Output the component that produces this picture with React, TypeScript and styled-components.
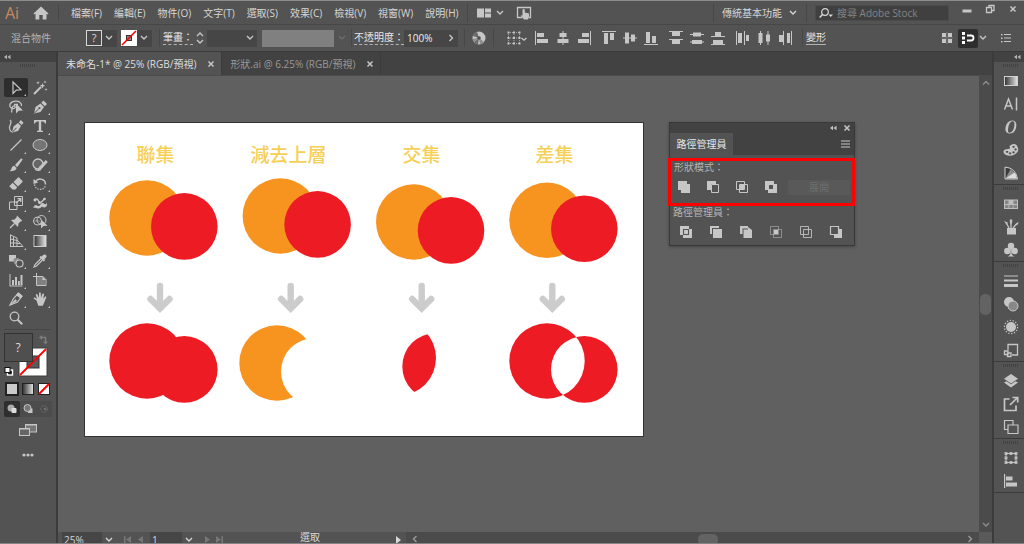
import React from "react";
import styled, { createGlobalStyle, css } from "styled-components";

const color = {
  panel: "#535353",
  dark: "#424242",
  field: "#464646",
  line: "#474747",
  edge: "#3b3b3b",
  canvas: "#606060",
  text: "#d6d6d6",
  muted: "#b4b4b4",
  icon: "#c6c6c6",
  orange: "#f7941f",
  red: "#ed1c24",
  mark: "#ff0000",
};

const GlobalStyle = createGlobalStyle`
  * { box-sizing: border-box; }
  body { margin: 0; overflow: hidden; background: ${color.panel}; }
  body, button, input, select {
    font-family: "Open Sans", "Noto Sans CJK TC", sans-serif;
    font-size: 10px;
    line-height: 16px;
    color: ${color.text};
  }
  button { padding: 0; border: 0; background: none; cursor: pointer; white-space: nowrap; }
  input, select { border: 0; border-radius: 0; padding: 0 3px; background: ${color.field}; min-width: 0; }
  svg { display: block; flex: none; }
`;

/* ---------- shell ---------- */

const Window = styled.div`
  display: flex;
  flex-direction: column;
  height: 100vh;
  border-top: 1px solid #8c8c8c;
  border-bottom: 1px solid #858585;
`;

const MenuBar = styled.header`
  display: flex;
  align-items: center;
  height: 24px;
  padding-left: 5px;
  background: ${color.panel};
  border-bottom: 1px solid ${color.line};
`;

const ControlBar = styled.div`
  display: flex;
  align-items: center;
  height: 27px;
  background: ${color.panel};
  border-bottom: 1px solid ${color.edge};
`;

const Body = styled.div`
  display: flex;
  flex: 1;
  min-height: 0;
`;

const Logo = styled.span`
  width: 28px;
  font-size: 16px;
  color: #c98860;
`;

const Menus = styled.nav`
  display: flex;
  gap: 12px;
  padding-left: 12px;
  margin-left: 9px;
  border-left: 1px solid ${color.line};
`;

const MenuButton = styled.button`
  color: ${color.text};
`;

const Spring = styled.div<{ $grow?: number }>`
  flex: ${(p) => p.$grow ?? 1};
`;

const Rule = styled.span<{ $gap: number }>`
  width: 1px;
  height: 18px;
  margin: 0 ${(p) => p.$gap}px;
  background: ${color.line};
`;

const IconButton = styled.button<{ $w?: number; $h?: number; $active?: boolean }>`
  display: flex;
  align-items: center;
  justify-content: center;
  flex: none;
  width: ${(p) => p.$w ?? 16}px;
  height: ${(p) => p.$h ?? 16}px;
  color: ${color.icon};
  border-radius: 2px;
  ${(p) => p.$active && css`background: #2e2e2e; color: #ffffff;`}
`;

const Workspace = styled.button`
  display: flex;
  align-items: center;
  gap: 6px;
`;

const Search = styled.label`
  display: flex;
  align-items: center;
  width: 134px;
  height: 16px;
  padding-left: 3px;
  background: #404040;
  border: 1px solid #4b4b4b;
  input { flex: 1; height: 14px; background: transparent; }
  input::placeholder { color: #848484; opacity: 1; }
`;

const WindowButtons = styled.div`
  display: flex;
  align-self: flex-start;
  margin-left: 6px;
`;

/* ---------- control bar ---------- */

const ObjectType = styled.span`
  width: 86px;
  padding-left: 11px;
  color: ${color.muted};
`;

const Swatch = styled.div`
  display: flex;
  align-items: center;
  width: 31px;
  height: 17px;
  margin-right: 4px;
  background: ${color.field};
`;

const FieldLabel = styled.label`
  line-height: 13px;
  border-bottom: 1px dashed ${color.muted};
  white-space: nowrap;
  color: #e6e6e6;
`;

const Combo = styled.div<{ $w: number }>`
  display: flex;
  align-items: center;
  width: ${(p) => p.$w}px;
  height: 17px;
  background: ${color.field};
  input { flex: 1; height: 17px; color: #f0f0f0; }
`;

const BrushSelect = styled.select`
  appearance: none;
  width: 72px;
  height: 17px;
  margin-left: 5px;
  background: #808080;
  opacity: 1;
`;

const AlignGroup = styled.div`
  display: flex;
  gap: 5px;
  margin-right: 9px;
`;

const TextLink = styled.button`
  margin-left: 3px;
  line-height: 13px;
  border-bottom: 1px solid ${color.muted};
  color: #e6e6e6;
`;

/* ---------- tools ---------- */

const Tools = styled.aside`
  flex: none;
  width: 58px;
  background: ${color.panel};
  border-right: 2px solid ${color.edge};
`;

const DockHeader = styled.div<{ $end?: boolean }>`
  display: flex;
  align-items: center;
  justify-content: ${(p) => (p.$end ? "flex-end" : "flex-start")};
  height: 10px;
  padding: 0 3px;
  background: ${color.dark};
  color: ${color.muted};
`;

const Grip = styled.div`
  height: 7px;
  width: 16px;
  margin: 0 auto;
  background: repeating-linear-gradient(90deg, #424242 0 1px, transparent 1px 2px) center / 16px 3px no-repeat;
`;

const ToolGrid = styled.div`
  display: grid;
  grid-template-columns: 24px 24px;
  grid-template-rows: repeat(13, 1fr);
  height: 250px;
  margin: 9px 0 0 4px;
`;

const ToolButton = styled.button<{ $active?: boolean; $more?: boolean }>`
  position: relative;
  display: flex;
  align-items: center;
  justify-content: center;
  color: ${color.icon};
  border-radius: 2px;
  ${(p) => p.$active && css`background: #2e2e2e;`}
  ${(p) => p.$more && css`
    &::after {
      content: "";
      position: absolute;
      right: 2px;
      bottom: 1px;
      border: 1px solid;
      border-color: transparent #c6c6c6 #c6c6c6 transparent;
    }
  `}
`;

const PaintArea = styled.div`
  margin: 1px 5px 0 4px;
  padding-top: 3px;
  border-top: 1px solid ${color.line};
`;

const ModeRow = styled.div<{ $boxed?: boolean }>`
  display: flex;
  width: 48px;
  margin-top: 4px;
  ${(p) => p.$boxed && css`background: #4c4c4c; border-radius: 2px;`}
`;

const CenterRow = styled.div`
  display: flex;
  justify-content: center;
  margin-top: 5px;
`;

/* ---------- document ---------- */

const Documents = styled.main`
  display: flex;
  flex-direction: column;
  flex: 1;
  min-width: 0;
`;

const Tabs = styled.div`
  display: flex;
  flex: none;
  height: 24px;
  background: ${color.dark};
  border-bottom: 1px solid #4b4b4b;
`;

const Tab = styled.div<{ $active?: boolean }>`
  display: flex;
  align-items: center;
  gap: 9px;
  padding: 0 4px 0 8px;
  border-right: 1px solid ${color.edge};
  background: ${(p) => (p.$active ? color.panel : color.dark)};
  button:first-child { color: ${(p) => (p.$active ? "#dedede" : "#999999")}; }
`;

const Stage = styled.div`
  display: flex;
  flex: 1;
  min-height: 0;
`;

const Canvas = styled.div`
  display: flex;
  align-items: flex-start;
  gap: 25px;
  flex: 1;
  min-width: 0;
  overflow: hidden;
  padding: 46px 0 0 26px;
  background: ${color.canvas};
`;

const Artboard = styled.section`
  display: grid;
  grid-template-columns: repeat(4, 133px);
  flex: none;
  padding: 18px 22px 26px 4px;
  background: #ffffff;
  border: 1px solid #333333;
`;

const Sample = styled.figure`
  margin: 0;
`;

const SampleTitle = styled.figcaption`
  height: 34px;
  font-size: 19px;
  line-height: 28px;
  font-weight: 500;
  text-align: center;
  color: #f6cf57;
`;

const VerticalScroll = styled.div`
  display: flex;
  flex-direction: column;
  align-items: center;
  flex: none;
  width: 13px;
  background: #4b4b4b;
`;

const ScrollButton = styled(IconButton)`
  color: #8e8e8e;
`;

const Thumb = styled.span<{ $w: number; $h: number }>`
  flex: none;
  width: ${(p) => p.$w}px;
  height: ${(p) => p.$h}px;
  border-radius: 5px;
  background: #636363;
`;

const StatusBar = styled.footer`
  display: flex;
  flex: none;
  height: 11px;
  overflow: hidden;
  background: ${color.panel};
`;

const StatusItem = styled.div<{ $w: number }>`
  display: flex;
  align-items: center;
  justify-content: center;
  flex: none;
  width: ${(p) => p.$w}px;
  height: 16px;
  color: ${color.text};
`;

const StatusText = styled.span`
  flex: none;
  width: 160px;
  line-height: 11px;
  text-align: center;
`;

const StatusField = styled.input<{ $w: number }>`
  flex: none;
  width: ${(p) => p.$w}px;
  height: 16px;
  padding: 0 2px;
`;

const HorizontalTrack = styled.div`
  display: flex;
  align-items: center;
  flex: 1;
  height: 14px;
  padding: 0 4px;
  background: #4b4b4b;
  color: #9a9a9a;
`;

const Corner = styled.div`
  width: 13px;
  background: #5a5a5a;
`;

/* ---------- floating panel ---------- */

const Floating = styled.section`
  flex: none;
  width: 186px;
  background: ${color.panel};
  border: 1px solid #393939;
  box-shadow: 0 1px 3px rgba(0, 0, 0, 0.3);
`;

const FloatingBar = styled.div`
  display: flex;
  align-items: center;
  justify-content: flex-end;
  gap: 6px;
  height: 10px;
  padding-right: 3px;
  background: ${color.dark};
`;

const FloatingTabs = styled.div`
  display: flex;
  justify-content: space-between;
  height: 22px;
  padding-right: 4px;
  background: ${color.dark};
`;

const FloatingTab = styled.button`
  width: 63px;
  background: ${color.panel};
  color: #e6e6e6;
`;

const ModeBox = styled.div`
  height: 48px;
  margin: 3px -1px 0 -2px;
  border: 3px solid ${color.mark};
`;

const GroupLabel = styled.div`
  padding-left: 3px;
  line-height: 12px;
  color: ${color.muted};
`;

const Operations = styled.div<{ $left: number; $gap: number }>`
  display: flex;
  align-items: center;
  gap: ${(p) => p.$gap}px;
  height: 16px;
  margin-top: 6px;
  padding-left: ${(p) => p.$left}px;
`;

const Expand = styled.button`
  width: 62px;
  height: 15px;
  margin-left: -5px;
  line-height: 15px;
  background: #595959;
  color: #6e6e6e;
`;

const FinderGroup = styled.div`
  padding: 0 0 5px;
`;

/* ---------- right dock ---------- */

const Dock = styled.aside`
  flex: none;
  width: 32px;
  background: ${color.panel};
  border-left: 2px solid ${color.edge};
`;

const DockGroup = styled.div`
  padding-left: 3px;
  border-bottom: 1px solid ${color.edge};
`;

const DockButton = styled.button`
  display: flex;
  align-items: center;
  justify-content: center;
  width: 100%;
  height: 23px;
  color: ${color.icon};
`;

/* ---------- icons ---------- */

const Icon = ({ w = 16, h = 16, children }: { w?: number; h?: number; children: React.ReactNode }) => (
  <svg width={w} height={h} viewBox={`0 0 ${w} ${h}`} fill="currentColor" aria-hidden="true">
    {children}
  </svg>
);

const Line = ({ d, width = 1.2 }: { d: string; width?: number }) => (
  <path d={d} fill="none" stroke="currentColor" strokeWidth={width} />
);

const Chevron = ({ dir = "down" }: { dir?: "down" | "up" | "left" | "right" }) => {
  const d = { down: "M2 3L5 6L8 3", up: "M2 6.5L5 3.5L8 6.5", left: "M6.5 2L3.5 5L6.5 8", right: "M3.5 2L6.5 5L3.5 8" }[dir];
  return <Icon w={10} h={10}><Line d={d} width={1.4} /></Icon>;
};

const Close = () => <Icon w={8} h={8}><Line d="M1.5 1.5L6.5 6.5M6.5 1.5L1.5 6.5" width={1.5} /></Icon>;

const Collapse = () => (
  <Icon w={8} h={6}><path d="M4 .8V5.2L1 3zM7.5 .8V5.2L4.5 3z" /></Icon>
);

const Bars = () => <Icon w={9} h={8}><Line d="M0 1H9M0 4H9M0 7H9" width={1} /></Icon>;

const alignIcons: [string, React.ReactNode][] = [
  ["水平齊左", <path d="M1 1h1v14h-1zM3 3h7v4h-7zM3 9h11v4h-11z" />],
  ["水平居中", <path d="M7.5 1h1v14h-1zM4.5 3h7v4h-7zM2.5 9h11v4h-11z" />],
  ["水平齊右", <path d="M14 1h1v14h-1zM6 3h7v4h-7zM2 9h11v4h-11z" />],
  ["垂直齊上", <path d="M1 1h14v1h-14zM3 3h4v11h-4zM9 3h4v7h-4z" />],
  ["垂直居中", <path d="M1 7.5h14v1h-14zM3 2.500h4v11h-4zM9 4.5h4v7h-4z" />],
  ["垂直齊下", <path d="M1 14h14v1h-14zM3 2h4v11h-4zM9 6h4v7h-4z" />],
  ["垂直依上緣均分", <path d="M1 1h14v1h-14zM4 2h8v4h-8zM1 9h14v1h-14zM4 10h8v4h-8z" />],
  ["垂直居中均分", <path d="M1 4h14v1h-14zM4 2.5h8v4h-8zM1 11.500h14v1h-14zM3 10h10v4h-10z" />],
  ["垂直依下緣均分", <path d="M1 6h14v1h-14zM5 2h6v4h-6zM1 14h14v1h-14zM3 10h10v4h-10z" />],
  ["水平依左緣均分", <path d="M1 1h1v14h-1zM3 3h4v10h-4zM9 1h1v14h-1zM11 5h3v6h-3z" />],
  ["水平居中均分", <path d="M4 1h1v14h-1zM2.500 3h4v10h-4zM11.500 1h1v14h-1zM10 4.500h4v7h-4z" />],
  ["水平依右緣均分", <path d="M6 1h1v14h-1zM2 5h4v7h-4zM14 1h1v14h-1zM10 3h3v10h-3z" />],
];

const toolIcons: [string, React.ReactNode, boolean][] = [
  ["選取工具", <Line d="M5 2V13.500L8.300 10.200L13 9.800Z" />, true],
  ["魔術棒工具", <><Line d="M2 14L9 7" width={2} /><path d="M10.500 3l.8 1.900 1.900.8-1.900.8-.8 1.900-.8-1.900-1.900-.8 1.900-.8zM6 1l.5 1.300 1.300.5-1.300.5L6 4.600l-.5-1.300-1.300-.5 1.300-.5zM13 .5l.4 1.100 1.100.4-1.100.4-.4 1.100-.4-1.100-1.100-.4 1.100-.4zM14 8l.4 1.100 1.100.4-1.100.4-.4 1.100-.4-1.100-1.100-.4 1.100-.4z" /></>, false],
  ["套索工具", <><Line d="M13.500 7C14 3.500 10.500 2 7.500 2.200C4 2.400 1.500 4.300 1.800 6.700C2 9.300 5 10 6.500 9.200C8 8.300 7 6.300 5.300 7C3.500 8 4 11 3.500 13.500M6 5.500H10" width={1.300} /><path d="M8 4.500V14.500L10.600 11.800L15 11.500Z" /></>, false],
  ["鋼筆工具", <><path d="M2 14.500L3.500 8L8.500 4.500L12 8L8.500 13Z" /><path d="M9.300 3.700L11.500 1.500L15 5L12.800 7.200Z" /><path d="M2.500 14L7 9.500" stroke="#535353" strokeWidth="1" /><circle cx="7.500" cy="9" r="1.100" fill="#535353" /></>, true],
  ["曲線工具", <><Line d="M2 2C5 4 1 7 1.500 10C2 13 3 14 5 14" /><path d="M4 14.500L5.500 8.500L10 5L13 8L10 13Z" /><path d="M10.800 4.200L12.800 2L15.500 4.800L13.700 7Z" /><path d="M4.500 14L8.500 9.800" stroke="#535353" /></>, false],
  ["文字工具", <path d="M2 2H14V5.500H12.900Q12.600 3.500 10.500 3.500H9.200V12Q9.200 13 11 13V14H5V13Q6.800 13 6.800 12V3.500H5.500Q3.400 3.500 3.100 5.500H2Z" />, true],
  ["線段區段工具", <Line d="M2.500 13.500L13.500 2.500" />, true],
  ["橢圓形工具", <ellipse cx="8" cy="8" rx="7" ry="5.500" fill="#757575" stroke="currentColor" />, true],
  ["繪圖筆刷工具", <><path d="M7 8L12.700 1.700Q14.500 1 14.500 2.700L9.200 10.200Z" /><path d="M6.200 8.800L8.600 11Q8 14.300 1.500 14.300Q3.500 13 3.600 11Q4 9 6.200 8.800Z" /></>, true],
  ["Shaper 工具", <><circle cx="6" cy="7" r="5" fill="#666" stroke="currentColor" strokeWidth="1.300" /><path d="M7 10L13.800 3L15.800 5L9.500 12L6 13.500Z" /><Line d="M3 12Q6 14.500 9 12.500" /></>, true],
  ["橡皮擦工具", <><path d="M5.500 6L10 1.500Q10.500 1 11 1.500L14.500 5Q15 5.500 14.500 6L10 10.500Z" /><path d="M4.700 6.800L9.200 11.300L7.500 13.500H4.500L1.500 10.500V10Z" /></>, true],
  ["旋轉工具", <><Line d="M4 5C7 1.500 13.500 3 13.500 8.500" width={1.500} /><path d="M1.500 3V8L6.200 6.500Z" /><path d="M2.500 8.500C3.500 14.500 11.500 15 13.300 10" fill="none" stroke="currentColor" strokeWidth="1.300" strokeDasharray="1.300 1.300" /></>, true],
  ["縮放工具", <><Line d="M6.500 1.500H14.500V10.500H6.500ZM1.500 7H9V14.500H1.500Z" width={1} /><Line d="M8 8L12.500 4M9.500 3.700H12.800V7" /></>, true],
  ["寬度工具", <><path d="M1 12.500Q3.500 9 5 10.500Q7 12 8.500 9.500Q10 7 12.500 9Q14.500 10 15 7.500Q15.500 12 12.500 12.500Q10.500 12.500 10 11.500Q8 14 5 13.200Q3 12.500 1 12.500Z" /><Line d="M2.500 4.500Q5.500 3 6.500 6T10 6.500T13 3" width={1.400} /><circle cx="3" cy="5" r="1.500" /><circle cx="7.500" cy="7.500" r="1.500" /><circle cx="12.500" cy="4" r="1.300" /></>, true],
  ["圖釘工具", <><path d="M9 1.500L14.500 7L12.500 7.500L10.500 9.500L10 13L3 6L6.500 5.500L8.500 3.500Z" /><Line d="M6.500 9.500L2 14" /></>, true],
  ["形狀建立程式工具", <><circle cx="5.500" cy="7" r="4" fill="none" stroke="currentColor" /><circle cx="9.500" cy="6" r="4.500" fill="none" stroke="currentColor" /><path d="M1.500 7H8" stroke="currentColor" strokeDasharray="1 1" /><path d="M9 5.500V14.500L11.500 12L15.500 11.700Z" /></>, true],
  ["透視格點工具", <><Line d="M2.500 1.500V14M2.500 2L9 5V13.500H2M2.500 6L9 7.500M2.500 10H9M5.500 3.500V13.500M9 7L15 13.500H9M9 10.500H12.500" width={1} /></>, true],
  ["漸層工具", <rect x="2" y="2.500" width="12" height="11" fill="url(#fade)" stroke="#cfcfcf" />, false],
  ["漸變工具", <><rect x="1" y="2" width="7" height="6.500" /><rect x="5.500" y="5" width="6" height="6" rx="2" fill="#8d8d8d" /><circle cx="11.500" cy="10.500" r="3.500" fill="#535353" stroke="currentColor" strokeWidth="1.200" /></>, true],
  ["檢色滴管工具", <><path d="M9.500 3.500L11.500 1.700Q14.500 .5 14.600 3.800L12.500 6.500L13 7.500L11.800 8.500L7.500 4.200L8.500 3Z" /><Line d="M9 5.500L3 11.500L2 14L4.500 13L10.500 7" /></>, true],
  ["長條圖工具", <path d="M1.500 2h1v11.500h12v1h-13zM4 8h2v5h-2zM7 5h2v8h-2zM10 9h1.800v4h-1.800zM12.500 3h2v10h-2z" />, true],
  ["工作區域工具", <><Line d="M4.500 1V13.500H14V7.500L11 4.500H1" width={1} /><path d="M5 5H10.500L13.500 8V13H5Z" fill="#808080" /><path d="M10.500 4.500V8H14Z" /></>, false],
  ["切片工具", <><Line d="M2 14L5.500 7.500L10.500 2L14 5L9.500 11Z" /><path d="M10 1.500L14.500 5.500L12.500 7.500L8 4ZM2 14L7.500 8L9 10Z" /></>, true],
  ["手形工具", <path d="M4.500 9.500L1.500 7.500Q2 5.800 3.800 7L5 8L3.800 3.800Q4.500 2.300 5.500 3.600L7 7L7 2Q7.900 .7 8.800 2L9 7L10.300 2.800Q11.500 1.900 12 3.200L11.300 7.700L13.200 5.500Q14.500 5.200 14.300 6.500L12 12L10.800 14.700H6.300Z" />, true],
  ["放大鏡工具", <><circle cx="6.500" cy="6.500" r="4.300" fill="none" stroke="currentColor" strokeWidth="1.300" /><Line d="M9.700 9.700L14.200 14.200" width={2} /></>, false],
];

const dockGroups: [string, React.ReactNode][][] = [
  [
    ["漸層", <rect x="1.500" y="3.500" width="13" height="9" fill="url(#fade)" stroke="#d0d0d0" />],
    ["字元", <Line d="M1.500 13.500L5.500 3L9.500 13.500M3 10H8M13.500 1.500V14.500" width={1.500} />],
    ["OpenType", <path fillRule="evenodd" d="M9.500 1.500C14 1.500 14 7 12.500 10.500C11 14 8.500 14.700 6 14.500C1.500 14 2 8.500 3.500 5.500C5 2.500 7 1.500 9.500 1.500ZM9.500 2.300C7 2.600 5.700 6 5.200 9C4.800 12 4.900 13.700 6.500 13.700C9.500 13.700 10.800 10 11.300 7C11.700 4 11.500 2.100 9.500 2.300Z" />],
    ["色彩", <path fillRule="evenodd" d="M8 3Q11 1 13.500 3Q16.500 7 14.500 10Q11 14.500 5 13.500Q.5 12.500 .5 9.500Q.7 7 5 7Q8 7 6.500 5Q6.500 3.500 8 3ZM4 8.700a1.300 1.100 0 1 0 .1 0ZM7 10.200a1.300 1.100 0 1 0 .1 0ZM10.500 9.200a1.300 1.100 0 1 0 .1 0ZM12.500 6.300a1.200 1.100 0 1 0 .1 0ZM10.500 3.700a1.200 1 0 1 0 .1 0Z" />],
    ["色彩參考", <><path d="M2 2Q13 3 14.500 14H2Z" fill="#3c3c3c" stroke="#d0d0d0" /><path d="M2.500 13.500L7.500 4.300Q13 7.500 14 13.500Z" fill="#8c8c8c" /><path d="M2.500 13.500L11.500 7.500Q13.500 10 14 13.500Z" fill="#dcdcdc" /></>],
  ],
  [
    ["色票", <><rect x="1" y="3.500" width="14" height="9.500" fill="#bdbdbd" /><path d="M2 4.500h3.500v3.500h-3.500zM10.500 4.500h3.500v3.500h-3.500zM2 9h3.500v3h-3.500zM6.300 9h3.500v3h-3.500zM10.500 9h3.500v3h-3.500z" fill="#858585" /></>],
    ["筆刷", <><path d="M4 9H13V15.500H4Z" /><Line d="M6 9L3 3.500M8 9V2M10 9L14 4.500" width={1.300} /><path d="M1 2L4.800 3.500L4 6ZM6.800 .5H9.300L9 4.500H7ZM15.500 2.500L15 5.500L12 6Z" /></>],
    ["符號", <><circle cx="8" cy="4" r="3.200" /><circle cx="4.300" cy="9" r="3.200" /><circle cx="11.700" cy="9" r="3.200" /><path d="M7.200 6H8.800L8.600 11.500Q9 13.500 11.500 14.500H4.500Q7 13.500 7.400 11.500Z" /></>],
  ],
  [
    ["筆畫", <path d="M1 2.500h14v1h-14zM1 6.500h14v2h-14zM1 11h14v3h-14z" />],
    ["透明度", <><circle cx="6" cy="6" r="5" /><circle cx="10" cy="10" r="5" fill="#888" stroke="currentColor" /></>],
    ["外觀", <><circle cx="8" cy="8" r="5" /><circle cx="8" cy="8" r="6.600" fill="none" stroke="currentColor" strokeWidth="1.200" strokeDasharray="1.300 1.660" /></>],
    ["繪圖樣式", <><Line d="M5 8V2.500H14.500V13H9" width={1.300} /><Line d="M1.500 9H5V12.500H1.500ZM4.500 11H8V14.500H4.500Z" width={1.300} /></>],
  ],
  [
    ["圖層", <><path d="M8 1L15 5.800L8 10.500L1 5.800Z" /><path d="M1 9.500L3.500 8.200L8 11.200L12.500 8.200L15 9.500L8 14.500Z" /></>],
    ["資產轉存", <Line d="M6.500 3H1.500V14.500H13V9.500M7 9L14 2M9.500 1.500H14.700V6.500" width={1.700} />],
    ["工作區域", <Line d="M4.500 10.500H1.500V1.500H10V5.500M5 6H15V14.500H5Z" width={1.200} />],
  ],
  [
    ["變形", <><Line d="M3 3.500H13V12.500H3Z" width={1} /><path d="M1.500 2h3v3h-3zM6.500 2h3v3h-3zM11.500 2h3v3h-3zM1.500 6.500h3v3h-3zM11.500 6.500h3v3h-3zM1.500 11h3v3h-3zM6.500 11h3v3h-3zM11.500 11h3v3h-3z" fillOpacity=".85" /></>],
    ["對齊", <path d="M1 1h1.200v14h-1.200zM3 3.500h6.500v4h-6.500zM3 9.500h11v4h-11z" />],
  ],
];

const twoSquares = "M1.500 1.500H9.500V9.500H1.500ZM4.500 4.500H12.500V12.500H4.500Z";

const shapeModes: [string, React.ReactNode][] = [
  ["聯集", <path d="M1 1H10V4H13V13H4V10H1Z" />],
  ["減去上層", <><path d="M1 1H10V4H5V10H1Z" /><Line d="M5.500 4.500H12.500V12.500H5.500Z" width={1} /></>],
  ["交集", <><Line d={twoSquares} width={1} /><path d="M5 5H9V9H5Z" /></>],
  ["差集", <path fillRule="evenodd" d="M1 1H10V4H13V13H4V10H1ZM5 5V9H9V5Z" />],
];

const finderModes: [string, React.ReactNode][] = [
  ["分割", <><path fillRule="evenodd" d="M1 1H10V4H13V13H4V10H1ZM4 4V10H10V4Z" /><path d="M5 5H9V9H5Z" /></>],
  ["剪裁覆蓋範圍", <><path d="M1 1H10V3H3V9H1Z" /><path d="M4 4H13V13H4Z" /></>],
  ["合併", <><path d="M1 1H9V3.500H3.500V9H1Z" /><path d="M4.500 4.500H9V2L13 5V13H4.500Z" /></>],
  ["裁切", <><g opacity=".5"><Line d={twoSquares} width={1} /></g><path d="M5 5H9V9H5Z" /></>],
  ["外框", <g opacity=".85"><Line d={twoSquares} width={1} /></g>],
  ["依後置物件剪裁", <><Line d="M1.500 1.500H9.500V9.500H1.500Z" width={1.200} /><path d="M10 4H13V13H5V10H10Z" /></>],
];

/* ---------- artwork ---------- */

type Point = [number, number];
type Mode = "unite" | "minus" | "intersect" | "exclude";

const back = 37.7;
const front = 33.3;
const frontOf = ([x, y]: Point): Point => [x + 37.3, y + 8.4];

const disc = ([x, y]: Point, r: number) =>
  `M${x - r} ${y}a${r} ${r} 0 1 0 ${2 * r} 0a${r} ${r} 0 1 0 ${-2 * r} 0Z`;

const Result = ({ mode, at }: { mode: Mode; at: Point }) => {
  const a = disc(at, back);
  const b = disc(frontOf(at), front);
  if (mode === "unite") return <path d={a + b} fill={color.red} />;
  if (mode === "exclude") return <path d={a + b} fillRule="evenodd" fill={color.red} />;
  if (mode === "minus")
    return (
      <>
        <mask id="cut"><rect y="-20" width="133" height="260" fill="#fff" /><path d={b} fill="#000" /></mask>
        <path d={a} fill={color.orange} mask="url(#cut)" />
      </>
    );
  return (
    <>
      <clipPath id="overlap"><path d={a} /></clipPath>
      <path d={b} fill={color.red} clipPath="url(#overlap)" />
    </>
  );
};

const samples: { title: string; mode: Mode; pair: Point; arrow: number; result: Point }[] = [
  { title: "聯集", mode: "unite", pair: [58, 43], arrow: 71, result: [58, 186] },
  { title: "減去上層", mode: "minus", pair: [58.3, 41], arrow: 68.7, result: [55, 188] },
  { title: "交集", mode: "intersect", pair: [58.7, 47], arrow: 66.7, result: [43.3, 183] },
  { title: "差集", mode: "exclude", pair: [59, 45.3], arrow: 64.3, result: [59, 186] },
];

const App = () => (
  <Window>
    <GlobalStyle />
    <svg width="0" height="0" aria-hidden="true">
      <defs>
        <linearGradient id="fade"><stop offset="0" stopColor="#303030" /><stop offset="1" stopColor="#e8e8e8" /></linearGradient>
      </defs>
    </svg>

    <MenuBar>
      <Logo>Ai</Logo>
      <IconButton aria-label="首頁">
        <Icon><path d="M8 1.500L15.500 8.500L14.500 9.600L13.500 8.800V14.500H9.700V10H6.300V14.500H2.500V8.800L1.500 9.600L.5 8.500Z" /></Icon>
      </IconButton>
      <Menus>
        {["檔案(F)", "編輯(E)", "物件(O)", "文字(T)", "選取(S)", "效果(C)", "檢視(V)", "視窗(W)", "說明(H)"].map((m) => (
          <MenuButton key={m}>{m}</MenuButton>
        ))}
      </Menus>
      <Rule $gap={8} />
      <IconButton aria-label="排列文件">
        <Icon><path d="M1 3.500H8V12.500H1ZM9 3.500H15V7.500H9ZM9 8.500H15V12.500H9Z" /></Icon>
      </IconButton>
      <IconButton aria-label="排列選項"><Chevron /></IconButton>
      <IconButton aria-label="觸控工作區" $w={32}>
        <Icon><Line d="M6 12.500H1.500V2.500H14.500V12.500H13" width={1.300} /><path d="M6.500 4.500Q8 3.500 8.800 4.500V7.500L13 8.500V12L12 14.500H8L4.500 10.500L6.500 10.500Z" /></Icon>
      </IconButton>
      <Spring />
      <Rule $gap={8} />
      <Workspace>傳統基本功能<Chevron /></Workspace>
      <Rule $gap={8} />
      <Search>
        <Icon w={15} h={12}><circle cx="6" cy="5" r="3.300" fill="none" stroke="currentColor" strokeWidth="1.200" /><Line d="M3.700 7.300L.7 10.500" width={1.500} /><path d="M9.500 7.500H14L11.700 10Z" /></Icon>
        <input type="search" aria-label="搜尋 Adobe Stock" placeholder="搜尋 Adobe Stock" />
      </Search>
      <WindowButtons>
        <IconButton aria-label="最小化" $w={23}><Icon w={10} h={10}><path d="M.5 5.500H9.500V8.500H.5Z" /></Icon></IconButton>
        <IconButton aria-label="還原" $w={23}><Icon w={10} h={10}><Line d="M4 3V1.500H9V6.500H7M1.500 3.500H6.500V8.500H1.500Z" width={1.300} /></Icon></IconButton>
        <IconButton aria-label="關閉" $w={23}><Close /></IconButton>
      </WindowButtons>
    </MenuBar>

    <ControlBar>
      <ObjectType>混合物件</ObjectType>
      <Swatch>
        <IconButton aria-label="填色">
          <Icon><rect x=".5" y=".5" width="15" height="15" fill="#4a4a4a" stroke="#d8d8d8" /><text x="8" y="12" textAnchor="middle" fontSize="11" fill="#d8d8d8">?</text></Icon>
        </IconButton>
        <IconButton aria-label="填色選項" $w={14}><Chevron /></IconButton>
      </Swatch>
      <Swatch>
        <IconButton aria-label="筆畫色彩">
          <Icon><rect width="16" height="16" fill="#fff" /><rect x="5.500" y="5.500" width="5" height="5" fill="#888" stroke="#333" /><path d="M1 15L15 1" stroke="red" strokeWidth="1.600" /></Icon>
        </IconButton>
        <IconButton aria-label="筆畫選項" $w={14}><Chevron /></IconButton>
      </Swatch>
      <Rule $gap={3} />
      <FieldLabel htmlFor="stroke">筆畫：</FieldLabel>
      <IconButton aria-label="調整筆畫" $w={14}>
        <Icon w={10} h={16}><Line d="M2 6L5 3L8 6M2 10L5 13L8 10" width={1.400} /></Icon>
      </IconButton>
      <Combo $w={50}>
        <input id="stroke" />
        <IconButton aria-label="筆畫寬度" $w={15}><Chevron /></IconButton>
      </Combo>
      <BrushSelect aria-label="筆刷定義" disabled />
      <IconButton aria-label="筆刷選項" $w={15}><Icon w={10} h={10}><path d="M2 3L5 6L8 3" fill="none" stroke="#6d6d6d" strokeWidth="1.400" /></Icon></IconButton>
      <Rule $gap={2} />
      <FieldLabel htmlFor="opacity">不透明度：</FieldLabel>
      <Combo $w={54}>
        <input id="opacity" defaultValue="100%" />
        <IconButton aria-label="不透明度滑桿" $w={14}><Chevron dir="right" /></IconButton>
      </Combo>
      <Rule $gap={6} />
      <IconButton aria-label="重新上色">
        <Icon><circle cx="8" cy="8" r="6.500" /><path d="M8 8L6 1.800A6.500 6.500 0 0 0 1.800 6ZM8 8L3 12A6.500 6.500 0 0 0 7 14.400Z" fill="#6c6c6c" /><path d="M8 8L1.600 9A6.500 6.500 0 0 0 3 12ZM8 8L9 14.400A6.500 6.500 0 0 0 13 12Z" fill="#8e8e8e" /><circle cx="8" cy="8" r="1.800" fill="#505050" /></Icon>
      </IconButton>
      <Rule $gap={6} />
      <IconButton aria-label="對齊至" $w={34}>
        <Icon w={22}><path d="M2 2.500H14M2 8H14M2 13.500H14M2.500 2V14M8 2V14M13.500 2V14" fill="none" stroke="currentColor" strokeDasharray="1 1" opacity=".7" /><path d="M1.500 1.500h2v2h-2zM7 1.500h2v2h-2zM12.500 1.500h2v2h-2zM1.500 7h2v2h-2zM7 7h2v2h-2zM12.500 7h2v2h-2zM1.500 12.500h2v2h-2zM7 12.500h2v2h-2zM12.500 12.500h2v2h-2z" /><Line d="M15.500 8L18 10.200L20.500 8" /></Icon>
      </IconButton>
      {[0, 3, 6, 9].map((start) => (
        <AlignGroup key={start}>
          {alignIcons.slice(start, start + 3).map(([name, art]) => (
            <IconButton key={name} aria-label={name}><Icon>{art}</Icon></IconButton>
          ))}
        </AlignGroup>
      ))}
      <Rule $gap={0} />
      <TextLink>變形</TextLink>
      <Spring />
      <IconButton aria-label="對齊像素" $w={22}>
        <Icon w={12} h={12}><path d="M1 1h4v4h-4zM7 1h4v4h-4zM1 7h4v4h-4zM7 7h4v4h-4z" /><path d="M6 0V12M0 6H12" stroke="#8a8a8a" strokeWidth=".7" /></Icon>
      </IconButton>
      <IconButton aria-label="靠齊點" $w={20} $h={19} $active>
        <Icon><path d="M2 2h3v3h-3zM2 6.500h3v3h-3zM2 11h3v3h-3z" /><Line d="M7 5.500H11Q13.500 5.500 13.500 8T11 10.500H7" width={1.800} /></Icon>
      </IconButton>
      <IconButton aria-label="靠齊選項" $w={10}><Chevron /></IconButton>
      <IconButton aria-label="控制列選單" $w={36}>
        <Icon w={10} h={10}><path d="M0 1h1.500v1.500h-1.500zM0 4.500h1.500v1.500h-1.500zM0 8h1.500v1.500h-1.500zM3 1h7v1h-7zM3 4.500h7v1h-7zM3 8h7v1h-7z" /></Icon>
      </IconButton>
    </ControlBar>

    <Body>
      <Tools>
        <DockHeader><Collapse /></DockHeader>
        <Grip />
        <ToolGrid>
          {toolIcons.map(([name, art, more], i) => (
            <ToolButton key={name} aria-label={name} $active={i === 0} $more={more}><Icon>{art}</Icon></ToolButton>
          ))}
        </ToolGrid>
        <PaintArea>
          <Icon w={46} h={44}>
            <path d="M15 15H43V43H15Z" fill="#fff" stroke="#3e3e3e" />
            <rect x="23" y="23" width="12" height="12" fill="#5a5a5a" stroke="#333" />
            <path d="M16 42L42 16" stroke="red" strokeWidth="1.800" />
            <rect x=".5" y=".5" width="28" height="28" fill="#4f4f4f" stroke="#333" />
            <text x="14" y="19" textAnchor="middle" fontSize="12" fill="#dcdcdc">?</text>
            <path d="M37 4.500H41.500V9" fill="none" stroke="#7d7d7d" strokeWidth="1.400" />
            <path d="M38 2V7L35 4.500ZM39 8.500H44L41.500 11.500Z" fill="#7d7d7d" />
            <rect x="3.500" y="37" width="5" height="5" fill="#111" stroke="#fff" strokeWidth="1.400" />
            <rect x="1" y="34.500" width="5" height="5" fill="#fff" stroke="#111" />
          </Icon>
          <ModeRow>
            <IconButton aria-label="色彩"><Icon w={14} h={14}><rect x="1" y="1" width="12" height="12" fill="#cbcbcb" stroke="#222" strokeWidth="2" /></Icon></IconButton>
            <IconButton aria-label="漸層"><Icon w={12} h={12}><rect x=".5" y=".5" width="11" height="11" fill="url(#fade)" stroke="#222" /></Icon></IconButton>
            <IconButton aria-label="無"><Icon w={12} h={12}><rect x=".5" y=".5" width="11" height="11" fill="#fff" stroke="#222" /><path d="M1 11L11 1" stroke="red" strokeWidth="2" /></Icon></IconButton>
          </ModeRow>
          <ModeRow $boxed>
            <IconButton aria-label="一般繪製" $active><Icon w={12} h={12}><circle cx="5" cy="5" r="3.500" fill="#aaa" /><rect x="5.500" y="5" width="5" height="5" rx="1" fill="#ddd" /></Icon></IconButton>
            <IconButton aria-label="繪製下層"><Icon w={12} h={12}><rect x="6" y="5.500" width="4.500" height="4.500" /><circle cx="5.500" cy="5" r="3.500" fill="#777" stroke="currentColor" /></Icon></IconButton>
            <IconButton aria-label="繪製內側" disabled><Icon w={12} h={12}><circle cx="6" cy="6" r="3.300" fill="none" stroke="#6f6f6f" strokeDasharray="2 1" /><circle cx="7" cy="6" r="1.300" fill="#6f6f6f" /></Icon></IconButton>
          </ModeRow>
          <CenterRow>
            <IconButton aria-label="變更螢幕模式" $w={20}>
              <Icon w={18} h={14}><rect x="6.500" y="1.500" width="11" height="7.500" fill="#777" stroke="currentColor" /><rect x=".5" y="5.500" width="10" height="7" fill="#666" stroke="currentColor" /><path d="M6 1h12v1.500h-12zM0 5h11v1.500h-11z" /></Icon>
            </IconButton>
          </CenterRow>
          <CenterRow>
            <IconButton aria-label="編輯工具列" $w={20} $h={24}>
              <Icon w={12} h={4}><circle cx="2" cy="2" r="1.600" /><circle cx="6" cy="2" r="1.600" /><circle cx="10" cy="2" r="1.600" /></Icon>
            </IconButton>
          </CenterRow>
        </PaintArea>
      </Tools>

      <Documents>
        <Tabs>
          <Tab $active>
            <button>未命名-1* @ 25% (RGB/預視)</button>
            <IconButton aria-label="關閉 未命名-1" $w={12}><Close /></IconButton>
          </Tab>
          <Tab>
            <button>形狀.ai @ 6.25% (RGB/預視)</button>
            <IconButton aria-label="關閉 形狀.ai" $w={12}><Close /></IconButton>
          </Tab>
        </Tabs>
        <Stage>
          <Canvas>
            <Artboard>
              {samples.map((s) => {
                const [bx, by] = s.pair;
                const [fx, fy] = frontOf(s.pair);
                return (
                  <Sample key={s.title}>
                    <SampleTitle>{s.title}</SampleTitle>
                    <svg width="133" height="235" viewBox="0 0 133 235" aria-hidden="true">
                      <circle cx={bx} cy={by} r={back} fill={color.orange} />
                      <circle cx={fx} cy={fy} r={front} fill={color.red} />
                      <g fill="none" stroke="#cccccc" strokeWidth="6.4" strokeLinecap="round" strokeLinejoin="miter">
                        <path d={`M${s.arrow} 111V130`} />
                        <path d={`M${s.arrow - 9.5} 124L${s.arrow} 133.500L${s.arrow + 9.5} 124`} />
                      </g>
                      <Result mode={s.mode} at={s.result} />
                    </svg>
                  </Sample>
                );
              })}
            </Artboard>

            <Floating aria-label="路徑管理員">
              <FloatingBar>
                <IconButton aria-label="收合" $w={8} $h={8}><Collapse /></IconButton>
                <IconButton aria-label="關閉面板" $w={8} $h={8}><Close /></IconButton>
              </FloatingBar>
              <FloatingTabs>
                <FloatingTab>路徑管理員</FloatingTab>
                <IconButton aria-label="面板選單" $w={10} $h={22}><Bars /></IconButton>
              </FloatingTabs>
              <ModeBox>
                <GroupLabel>形狀模式：</GroupLabel>
                <Operations $left={6} $gap={15}>
                  {shapeModes.map(([name, art]) => (
                    <IconButton key={name} aria-label={name} $w={14}><Icon w={14} h={14}>{art}</Icon></IconButton>
                  ))}
                  <Expand disabled>展開</Expand>
                </Operations>
              </ModeBox>
              <FinderGroup>
                <GroupLabel>路徑管理員：</GroupLabel>
                <Operations $left={9} $gap={16}>
                  {finderModes.map(([name, art]) => (
                    <IconButton key={name} aria-label={name} $w={14}><Icon w={14} h={14}>{art}</Icon></IconButton>
                  ))}
                </Operations>
              </FinderGroup>
            </Floating>
          </Canvas>
          <VerticalScroll>
            <ScrollButton aria-label="向上捲動" $w={12} $h={14}><Chevron dir="up" /></ScrollButton>
            <Spring />
            <Thumb $w={11} $h={21} />
            <Spring />
            <ScrollButton aria-label="向下捲動" $w={12} $h={14}><Chevron /></ScrollButton>
          </VerticalScroll>
        </Stage>
        <StatusBar>
          <StatusItem $w={4} />
          <StatusField $w={40} aria-label="縮放" defaultValue="25%" />
          <StatusItem $w={14}><Chevron /></StatusItem>
          <StatusItem $w={34}><Icon w={24} h={10}><path d="M3 1h1.500v7h-1.500zM10 1V8L5 4.500ZM22 1V8L17 4.500Z" fill="#777" /></Icon></StatusItem>
          <StatusField $w={32} aria-label="工作區域" defaultValue="1" />
          <StatusItem $w={14}><Chevron /></StatusItem>
          <StatusItem $w={34}><Icon w={24} h={10}><path d="M4 1V8L9 4.500ZM15 1V8L20 4.500ZM20.500 1h1.500v7h-1.500z" fill="#777" /></Icon></StatusItem>
          <StatusText>選取</StatusText>
          <StatusItem $w={16}><Icon w={8} h={10}><path d="M2 1V9L7 5Z" /></Icon></StatusItem>
          <HorizontalTrack>
            <Chevron dir="left" />
            <Spring $grow={9} />
            <Thumb $w={20} $h={11} />
            <Spring $grow={8} />
            <Chevron dir="right" />
          </HorizontalTrack>
          <Corner />
        </StatusBar>
      </Documents>

      <Dock>
        <DockHeader $end><Collapse /></DockHeader>
        {dockGroups.map((group, i) => (
          <DockGroup key={i}>
            <Grip />
            {group.map(([name, art]) => (
              <DockButton key={name} aria-label={name}><Icon>{art}</Icon></DockButton>
            ))}
          </DockGroup>
        ))}
      </Dock>
    </Body>
  </Window>
);

export default App;
